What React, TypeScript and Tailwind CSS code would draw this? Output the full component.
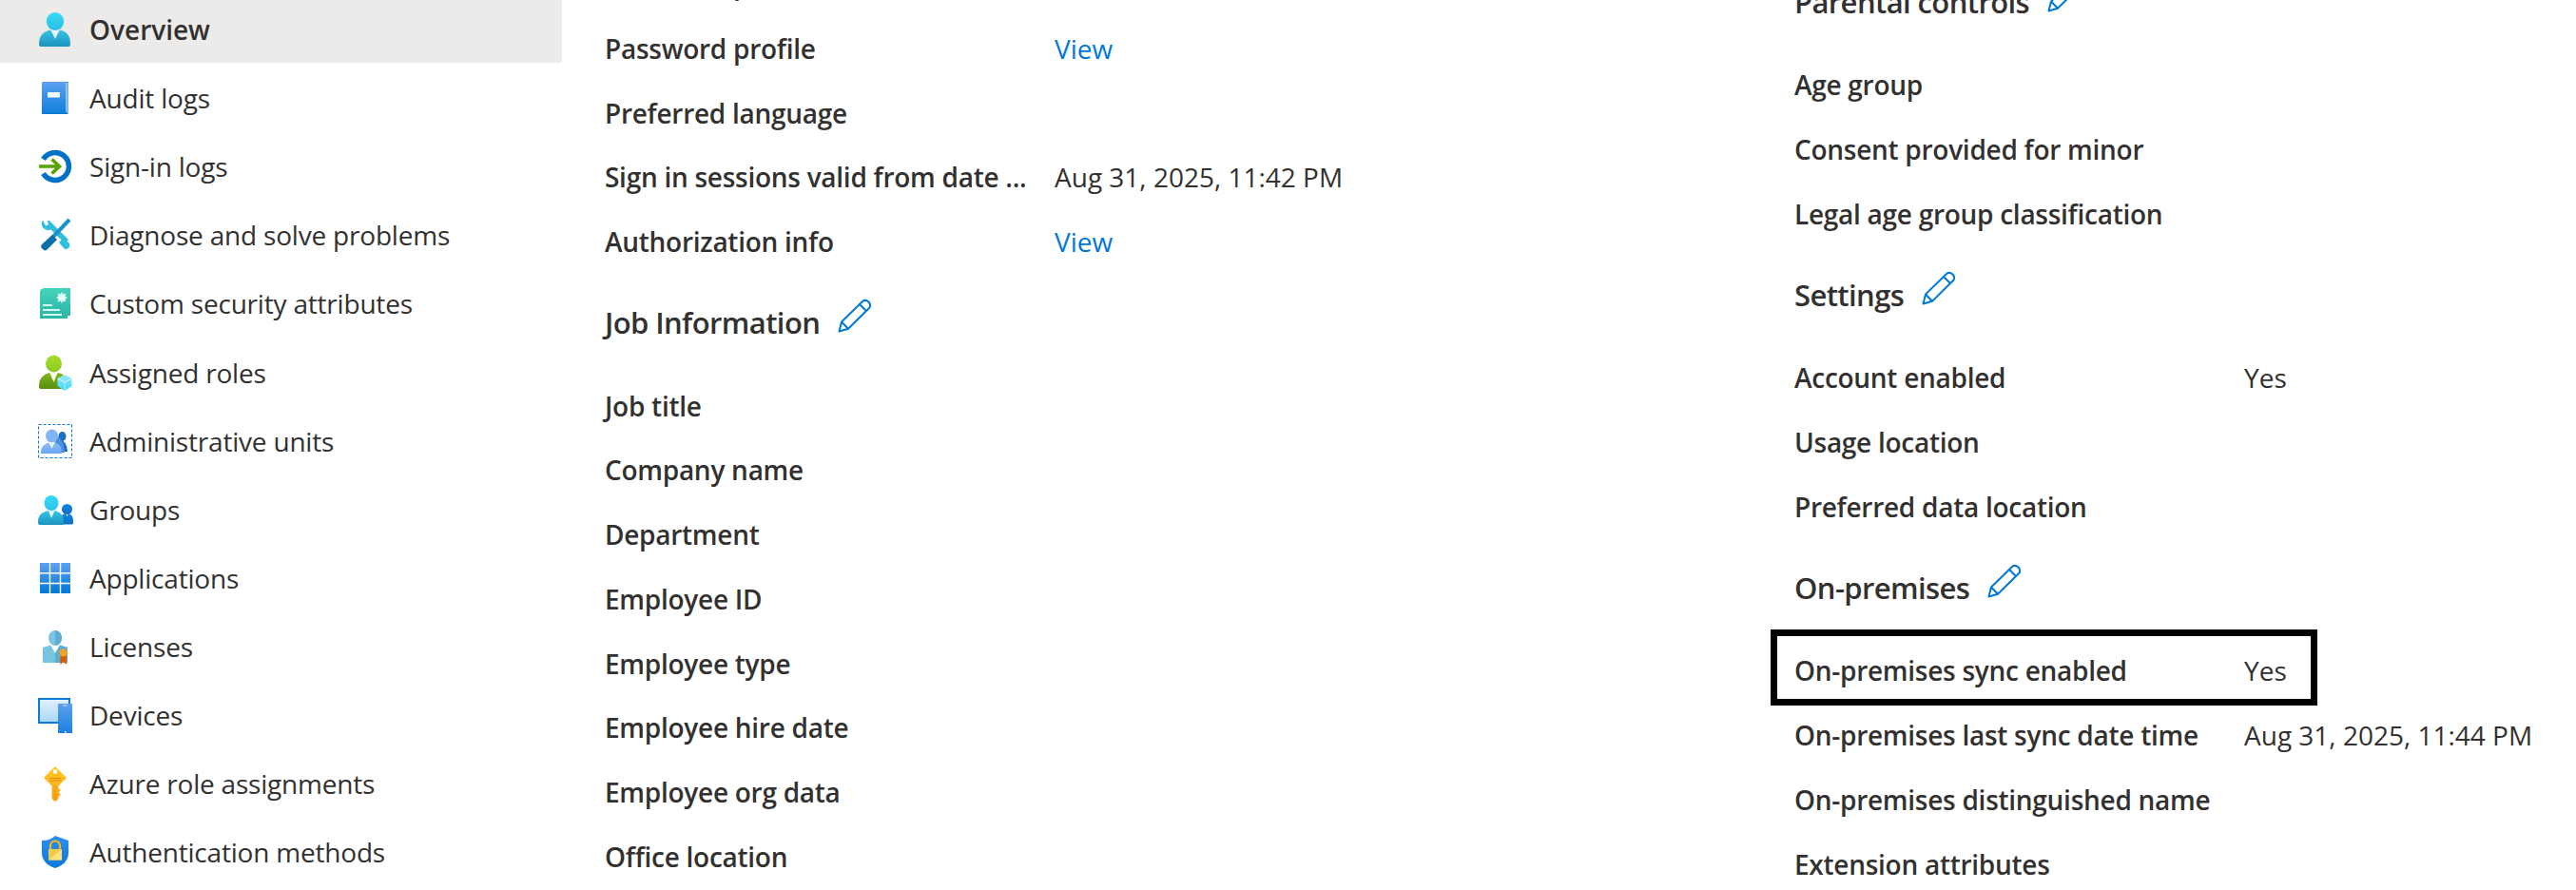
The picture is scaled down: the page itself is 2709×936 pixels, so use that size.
import React from "react";

type R = React.ReactNode;

function Ico({ children, defs }: { children: R; defs?: R }) {
  return (
    <svg viewBox="0 0 38 38" className="w-[38px] h-[38px] shrink-0">
      {defs && <defs>{defs}</defs>}
      {children}
    </svg>
  );
}

const Grad = ({ id, a, b }: { id: string; a: string; b: string }) => (
  <linearGradient id={id} x1="0" y1="0" x2="0" y2="1">
    <stop offset="0" stopColor={a} />
    <stop offset="1" stopColor={b} />
  </linearGradient>
);

const IconOverview = () => (
  <Ico defs={<><Grad id="o1" a="#37d9f8" b="#2bbfe6" /><Grad id="o2" a="#36c4e8" b="#1b93bd" /></>}>
    <path d="M2 34.5C2 25 7 21 14 19.5L19 27L24 19.5C31 21 35 25 35 34.5Q35 37 33 37H4Q2 37 2 34.5Z" fill="url(#o2)" />
    <path d="M14.5 19.5H23.5L19 29Z" fill="#e8f8fd" />
    <ellipse cx="19" cy="10.5" rx="9.2" ry="9.5" fill="url(#o1)" />
  </Ico>
);

const IconAudit = () => (
  <Ico defs={<Grad id="a1" a="#5ea0ef" b="#0f7fdc" />}>
    <path d="M6 2H32.5V36H5V3.5Z" fill="#0a6fc2" />
    <path d="M7 3H31.5V35H31V33.5H5V4Z" fill="#fff" />
    <path d="M5 3.5L7 2H30.5V35.5H5Z" fill="url(#a1)" />
    <rect x="11" y="13" width="13" height="5.5" rx="1" fill="#f4f9fe" />
  </Ico>
);

const IconSignIn = () => (
  <Ico>
    <path d="M6.5 11.5A14.5 14.5 0 1 1 6.5 26.5" fill="none" stroke="#0072c6" strokeWidth="5.5" />
    <path d="M2 19H23M15.5 11.5L23.5 19L15.5 26.5" fill="none" stroke="#57a300" strokeWidth="3.6" />
  </Ico>
);

const IconDiagnose = () => (
  <Ico>
    <path d="M31 26L13 8" stroke="#32bedd" strokeWidth="5.5" fill="none" />
    <path d="M28 22L34 28Q35 31 33 33Q30 35 28 33L23 27Z" fill="#32bedd" />
    <path d="M6 3.5A6.5 6.5 0 0 0 8 13Q12 15.5 16 12.5Q17 8 13.5 4.5L10.5 3.5L12 8L9 9.5Z" fill="#32bedd" />
    <path d="M34 3L16 22" stroke="#1b93c9" strokeWidth="4" fill="none" />
    <path d="M16 19L21 24L10 35Q8 36 6.5 34.5L4.5 32.5Q3.5 31 5 29Z" fill="#0a6fa8" />
  </Ico>
);

const IconCustom = () => (
  <Ico defs={<Grad id="c1" a="#44d3bd" b="#2ab5a4" />}>
    <path d="M7 3H35V32H32V35H3V7Q3 4 7 3Z" fill="url(#c1)" />
    <circle cx="26" cy="13" r="4" fill="#e9fbf7" />
    <circle cx="26" cy="13" r="1.6" fill="#35c3af" />
    <path d="M26 7.5V18.5M20.5 13H31.5M22 9L30 17M30 9L22 17" stroke="#e9fbf7" strokeWidth="1.4" />
    <rect x="6" y="20" width="10" height="2" fill="#d6f6f0" />
    <rect x="6" y="25" width="18" height="2" fill="#d6f6f0" />
    <rect x="6" y="30" width="20" height="2" fill="#d6f6f0" />
  </Ico>
);

const IconRoles = () => (
  <Ico defs={<><Grad id="r1" a="#a6dd2c" b="#8ccb1f" /><Grad id="r2" a="#86b51e" b="#548f0f" /><Grad id="r3" a="#9cebff" b="#3bd3f5" /></>}>
    <path d="M2 33C2 24 7 21 13 19L17.5 26L22 19C26 20 28 21 29 23L29 36H4Q2 36 2 34Z" fill="url(#r2)" />
    <path d="M13.5 19H21.5L17.5 29Z" fill="#f4fbe8" />
    <ellipse cx="17.5" cy="9.5" rx="8.5" ry="9" fill="url(#r1)" />
    <path d="M29 21L36.5 25V33L29 38L21.5 33V25Z" fill="url(#r3)" />
    <path d="M21.5 25L29 29L36.5 25" fill="none" stroke="#dff9ff" strokeWidth="1" />
    <path d="M29 29V38" stroke="#bdf3ff" strokeWidth="1" />
  </Ico>
);

const IconAdmin = () => (
  <Ico defs={<Grad id="u1" a="#8dbcf7" b="#6aa6f1" />}>
    <rect x="1.5" y="1.5" width="35" height="35" fill="none" stroke="#0078d4" strokeWidth="1.1" strokeDasharray="3 2" />
    <path d="M23 30V18Q31 17 32 30Z" fill="#1a6fc0" />
    <ellipse cx="26.5" cy="14" rx="4" ry="5" fill="#1a6fc0" />
    <path d="M19 31V16L22 14Q29 20 29 31Z" fill="#4a8fe0" />
    <path d="M4 32C4 24 8 22 12.5 20.5L15.5 25L18.5 20.5C23 22 26 24 26 32Z" fill="url(#u1)" />
    <ellipse cx="15.5" cy="13.5" rx="6.5" ry="7" fill="#82b4f5" />
    <path d="M12.5 20.5H18.5L15.5 27Z" fill="#e6f1fd" />
  </Ico>
);

const IconGroups = () => (
  <Ico defs={<><Grad id="g1" a="#37d9f8" b="#2bc3e8" /><Grad id="g2" a="#36c4e8" b="#1b93bd" /><Grad id="g3" a="#0f86de" b="#0a6fc2" /></>}>
    <path d="M24 30.5C24 26 26 24 30 23L31.5 26L33 23C36 24 38 26 38 31V33Q38 34.5 36 34.5H25Z" fill="url(#g3)" />
    <circle cx="31.5" cy="18.5" r="5.5" fill="url(#g3)" />
    <path d="M1 32C1 24 6 21.5 12 20L15 26L18 20C24 21.5 28 24 28 32V35H3Q1 35 1 33Z" fill="url(#g2)" />
    <path d="M12 20H18.5L15 28Z" fill="#e8f8fd" />
    <ellipse cx="15" cy="12" rx="7.5" ry="8" fill="url(#g1)" />
  </Ico>
);

const IconApps = () => (
  <Ico defs={<Grad id="p1" a="#5ea0ef" b="#0078d4" />}>
    <path d="M3 3H35V35H3Z" fill="url(#p1)" />
    <path d="M13.5 3V35M24.5 3V35M3 13.8H35M3 24.5H35" stroke="#fff" strokeWidth="1.4" />
  </Ico>
);

const IconLicenses = () => (
  <Ico>
    <path d="M6 20L14 17.5L19 26L24 17.5L32 20V36H6Z" fill="#76c3e2" />
    <path d="M19 26L24 17.5L32 20V36H19Z" fill="#5eaed2" />
    <ellipse cx="19" cy="10" rx="7" ry="8" fill="#7cc4e3" />
    <path d="M19 2A7 8 0 0 1 19 18Z" fill="#5eaed2" />
    <path d="M24.5 26H31V38L27.7 35L24.5 38Z" fill="#d95a00" />
    <circle cx="27.7" cy="25.5" r="4" fill="#f5a31b" />
  </Ico>
);

const IconDevices = () => (
  <Ico defs={<><Grad id="d1" a="#e2f2fc" b="#a9d6f5" /><Grad id="d2" a="#5ea0ef" b="#1a81e0" /></>}>
    <rect x="2" y="2" width="32" height="25" fill="url(#d1)" stroke="#0a7bd9" strokeWidth="2" />
    <rect x="22" y="7" width="15" height="31" fill="url(#d2)" />
    <rect x="27" y="8.5" width="5" height="1" fill="#c7defa" />
    <rect x="29" y="36" width="1.5" height="1.5" fill="#fff" />
  </Ico>
);

const IconKey = () => (
  <Ico defs={<Grad id="k1" a="#ffc91f" b="#f5a31b" />}>
    <path d="M19 1L31 13L22.5 21.5V24L25 26L22.5 28.5L25 30.5L22.5 33V35L19 38L15.5 35V21.5L7 13Z" fill="url(#k1)" />
    <circle cx="19" cy="6.5" r="2.3" fill="#fff" />
    <path d="M13 13.5H25M13 16H25" stroke="#e8880f" strokeWidth="1" />
    <path d="M19 21V36" stroke="#e8940f" strokeWidth="1" />
  </Ico>
);

const IconShield = () => (
  <Ico defs={<Grad id="s1" a="#2f8ff0" b="#0a78d9" />}>
    <path d="M19 2L33 7V20Q33 31 19 36Q5 31 5 20V7Q14 7 19 2Z" fill="url(#s1)" />
    <path d="M14 17V12.5A5 5 0 0 1 24 12.5V17" fill="none" stroke="#f7b90f" strokeWidth="2.2" />
    <rect x="12" y="16" width="14" height="11.5" rx="1" fill="#f7c948" />
    <path d="M12 27.5L26 16V27.5Z" fill="#fbe27a" />
  </Ico>
);

function Pencil() {
  return (
    <svg viewBox="0 0 36 36" className="w-[36px] h-[36px] shrink-0 -translate-y-[7px]">
      <path
        d="M1.5 34.5L4 24.5L26 3Q29 0.5 32.5 3.5Q35.5 7 33 10L11 31.8Z M4 24.5L11 31.8 M23 6L30 13"
        fill="none"
        stroke="#0078d4"
        strokeWidth="2"
        strokeLinejoin="round"
      />
    </svg>
  );
}

const navItems: [R, string, boolean?][] = [
  [<IconOverview />, "Overview", true],
  [<IconAudit />, "Audit logs"],
  [<IconSignIn />, "Sign-in logs"],
  [<IconDiagnose />, "Diagnose and solve problems"],
  [<IconCustom />, "Custom security attributes"],
  [<IconRoles />, "Assigned roles"],
  [<IconAdmin />, "Administrative units"],
  [<IconGroups />, "Groups"],
  [<IconApps />, "Applications"],
  [<IconLicenses />, "Licenses"],
  [<IconDevices />, "Devices"],
  [<IconKey />, "Azure role assignments"],
  [<IconShield />, "Authentication methods"],
];

function Row({ label, value, link, boxed }: { label: string; value?: string; link?: boolean; boxed?: boolean }) {
  return (
    <div className="relative grid grid-cols-[473px_1fr] items-center h-[67.7px] whitespace-nowrap">
      <div className="font-semibold tracking-[-0.27px] pb-[1px]">{label}</div>
      {value && <div className={link ? "text-[#0078d4] pb-[1px]" : "pb-[1px]"}>{value}</div>}
      {boxed && (
        <div className="absolute left-[-25px] top-[-10px] w-[575px] h-[80px] border-[7px] border-black" />
      )}
    </div>
  );
}

function Heading({ children }: { children: string }) {
  return (
    <div className="flex items-center h-[105px] pb-[3px] whitespace-nowrap gap-[19px]">
      <span className="text-[31px] font-semibold tracking-[-0.6px]">{children}</span>
      <Pencil />
    </div>
  );
}

export default function App() {
  return (
    <div className="flex h-[936px] w-[2709px] overflow-hidden bg-white text-[#323130] text-[28px] leading-none font-['Open_Sans','Noto_Sans',sans-serif]">
      <nav className="w-[591px] shrink-0 -mt-[5px]">
        {navItems.map(([icon, label, active]) => (
          <div
            key={label}
            className={
              active
                ? "flex items-center h-[71px] mb-[1.1px] pl-[39px] gap-[17px] bg-[#edebe9]"
                : "flex items-center h-[72.1px] pl-[39px] gap-[17px]"
            }
          >
            {icon}
            <span className={active ? "whitespace-nowrap font-semibold" : "whitespace-nowrap tracking-[-0.2px]"}>{label}</span>
          </div>
        ))}
      </nav>
      <main className="flex pl-[45px]">
        <div className="w-[1251px] shrink-0 -mt-[50px]">
          <Row label="Password policies" />
          <Row label="Password profile" value="View" link />
          <Row label="Preferred language" />
          <Row label="Sign in sessions valid from date ..." value="Aug 31, 2025, 11:42 PM" />
          <Row label="Authorization info" value="View" link />
          <Heading>Job Information</Heading>
          <Row label="Job title" />
          <Row label="Company name" />
          <Row label="Department" />
          <Row label="Employee ID" />
          <Row label="Employee type" />
          <Row label="Employee hire date" />
          <Row label="Employee org data" />
          <Row label="Office location" />
        </div>
        <div className="w-[822px] shrink-0 -mt-[49px]">
          <Heading>Parental controls</Heading>
          <Row label="Age group" />
          <Row label="Consent provided for minor" />
          <Row label="Legal age group classification" />
          <Heading>Settings</Heading>
          <Row label="Account enabled" value="Yes" />
          <Row label="Usage location" />
          <Row label="Preferred data location" />
          <Heading>On-premises</Heading>
          <Row label="On-premises sync enabled" value="Yes" boxed />
          <Row label="On-premises last sync date time" value="Aug 31, 2025, 11:44 PM" />
          <Row label="On-premises distinguished name" />
          <Row label="Extension attributes" />
        </div>
      </main>
    </div>
  );
}
